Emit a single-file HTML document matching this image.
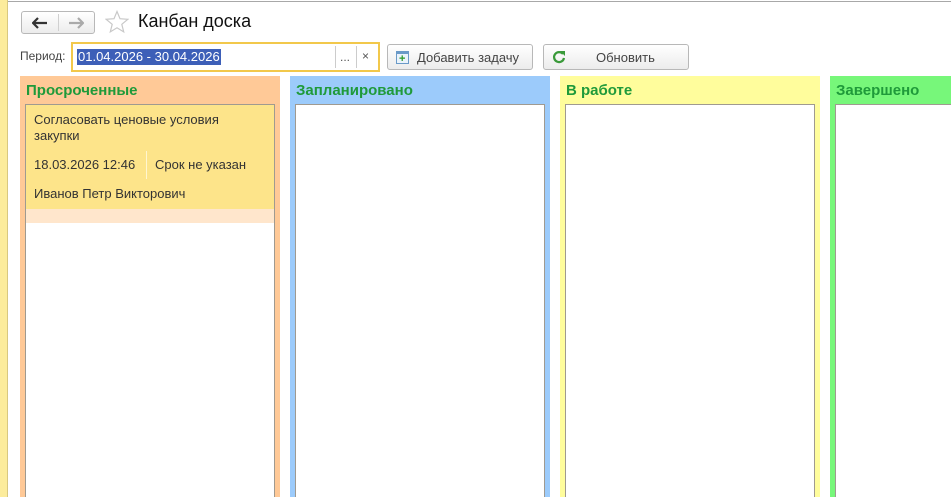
<!DOCTYPE html>
<html><head><meta charset="utf-8"><style>
*{box-sizing:border-box;margin:0;padding:0}
html,body{width:951px;height:497px;overflow:hidden}
body{background:#fff;font-family:"Liberation Sans",Arial,sans-serif;position:relative;font-size:12px;color:#333}
.a{position:absolute}
.col{position:absolute;top:76px;height:421px;overflow:hidden}
.col h2{position:absolute;left:6px;top:6px;font-size:15px;font-weight:bold;color:#1f9a3a;white-space:nowrap}
.inner{position:absolute;left:5px;top:28px;width:250px;height:400px;background:#fff;border:1px solid #a09a90}
.btn{position:absolute;border:1px solid #b8b8b8;border-radius:3px;background:linear-gradient(#fff,#ececec);font-size:13px;color:#444}
</style></head><body>
<div class="a" style="left:0;top:0;width:8px;height:497px;background:#fcec9c;border-right:1px solid #d8c880"></div>
<div class="a" style="left:8px;top:1px;width:943px;height:1px;background:#a8a8a8"></div>

<div class="btn" style="left:21px;top:11px;width:74px;height:23px">
 <div class="a" style="left:36px;top:2px;width:1px;height:17px;background:#d0d0d0"></div>
 <svg class="a" style="left:10px;top:5px" width="16" height="12"><path d="M1 6h14M6 1L1 6l5 5" stroke="#333" stroke-width="2.2" fill="none"/></svg>
 <svg class="a" style="left:46px;top:5px" width="16" height="12"><path d="M1 6h14M10 1l5 5-5 5" stroke="#aaa" stroke-width="2.2" fill="none"/></svg>
</div>
<svg class="a" style="left:105px;top:10px" width="24" height="24"><path d="M12 1.5l3 7.2 7.8.6-6 5 1.9 7.6L12 17.8 5.3 21.9l1.9-7.6-6-5 7.8-.6z" fill="none" stroke="#c8c8c8" stroke-width="1.2"/></svg>
<div class="a" style="left:138px;top:11px;font-size:18px;color:#111">Канбан доска</div>

<div class="a" style="left:20px;top:49px;font-size:12px;color:#444">Период:</div>
<div class="a" style="left:71px;top:42px;width:309px;height:30px;border:2px solid #f2c84b;background:#fff">
 <div class="a" style="left:4px;top:5px;height:16px;padding:0 1px;background:#3d5fb8;color:#fff;font-size:13px;line-height:16px">01.04.2026 - 30.04.2026</div>
 <div class="a" style="left:262px;top:2px;width:1px;height:22px;background:#ccc"></div>
 <div class="a" style="left:267px;top:6px;color:#555">...</div>
 <div class="a" style="left:283px;top:2px;width:1px;height:22px;background:#ccc"></div>
 <div class="a" style="left:289px;top:5px;color:#555">×</div>
</div>
<div class="btn" style="left:387px;top:44px;width:146px;height:26px">
 <div class="a" style="left:8px;top:6px;width:13px;height:13px;border:1px solid #6a9ac8;background:#eaf3fb"><div class="a" style="left:0;top:0;width:11px;height:2px;background:#6a9ac8"></div><div class="a" style="left:2px;top:2px;font-size:11px;line-height:10px;font-weight:bold;color:#2a9a2a">+</div></div>
 <div class="a" style="left:29px;top:5px">Добавить задачу</div>
</div>
<div class="btn" style="left:543px;top:44px;width:146px;height:26px">
 <svg class="a" style="left:8px;top:5px" width="14" height="14"><path d="M11 4A5 5 0 1 0 12 8" stroke="#3a9a3a" stroke-width="2.2" fill="none"/><path d="M8 1h5v5z" fill="#3a9a3a"/></svg>
 <div class="a" style="left:52px;top:5px">Обновить</div>
</div>

<div class="col" style="left:20px;width:260px;background:#ffc997"><h2>Просроченные</h2>
 <div class="inner">
  <div class="a" style="left:0;top:0;width:248px;height:104px;background:#fde48a">
   <div class="a" style="left:8px;top:7px;font-size:13px;line-height:16px;color:#333">Согласовать ценовые условия<br>закупки</div>
   <div class="a" style="left:8px;top:52px;font-size:13px">18.03.2026 12:46</div>
   <div class="a" style="left:120px;top:46px;width:1px;height:28px;background:#fff6d0"></div>
   <div class="a" style="left:129px;top:52px;font-size:13px">Срок не указан</div>
   <div class="a" style="left:8px;top:81px;font-size:13px">Иванов Петр Викторович</div>
  </div>
  <div class="a" style="left:0;top:104px;width:248px;height:14px;background:#ffe6cc"></div>
 </div>
</div>
<div class="col" style="left:290px;width:260px;background:#9ccbfb"><h2>Запланировано</h2><div class="inner"></div></div>
<div class="col" style="left:560px;width:260px;background:#fffd9c"><h2>В работе</h2><div class="inner"></div></div>
<div class="col" style="left:830px;width:121px;background:#77f77a"><h2>Завершено</h2><div class="inner"></div></div>
</body></html>
